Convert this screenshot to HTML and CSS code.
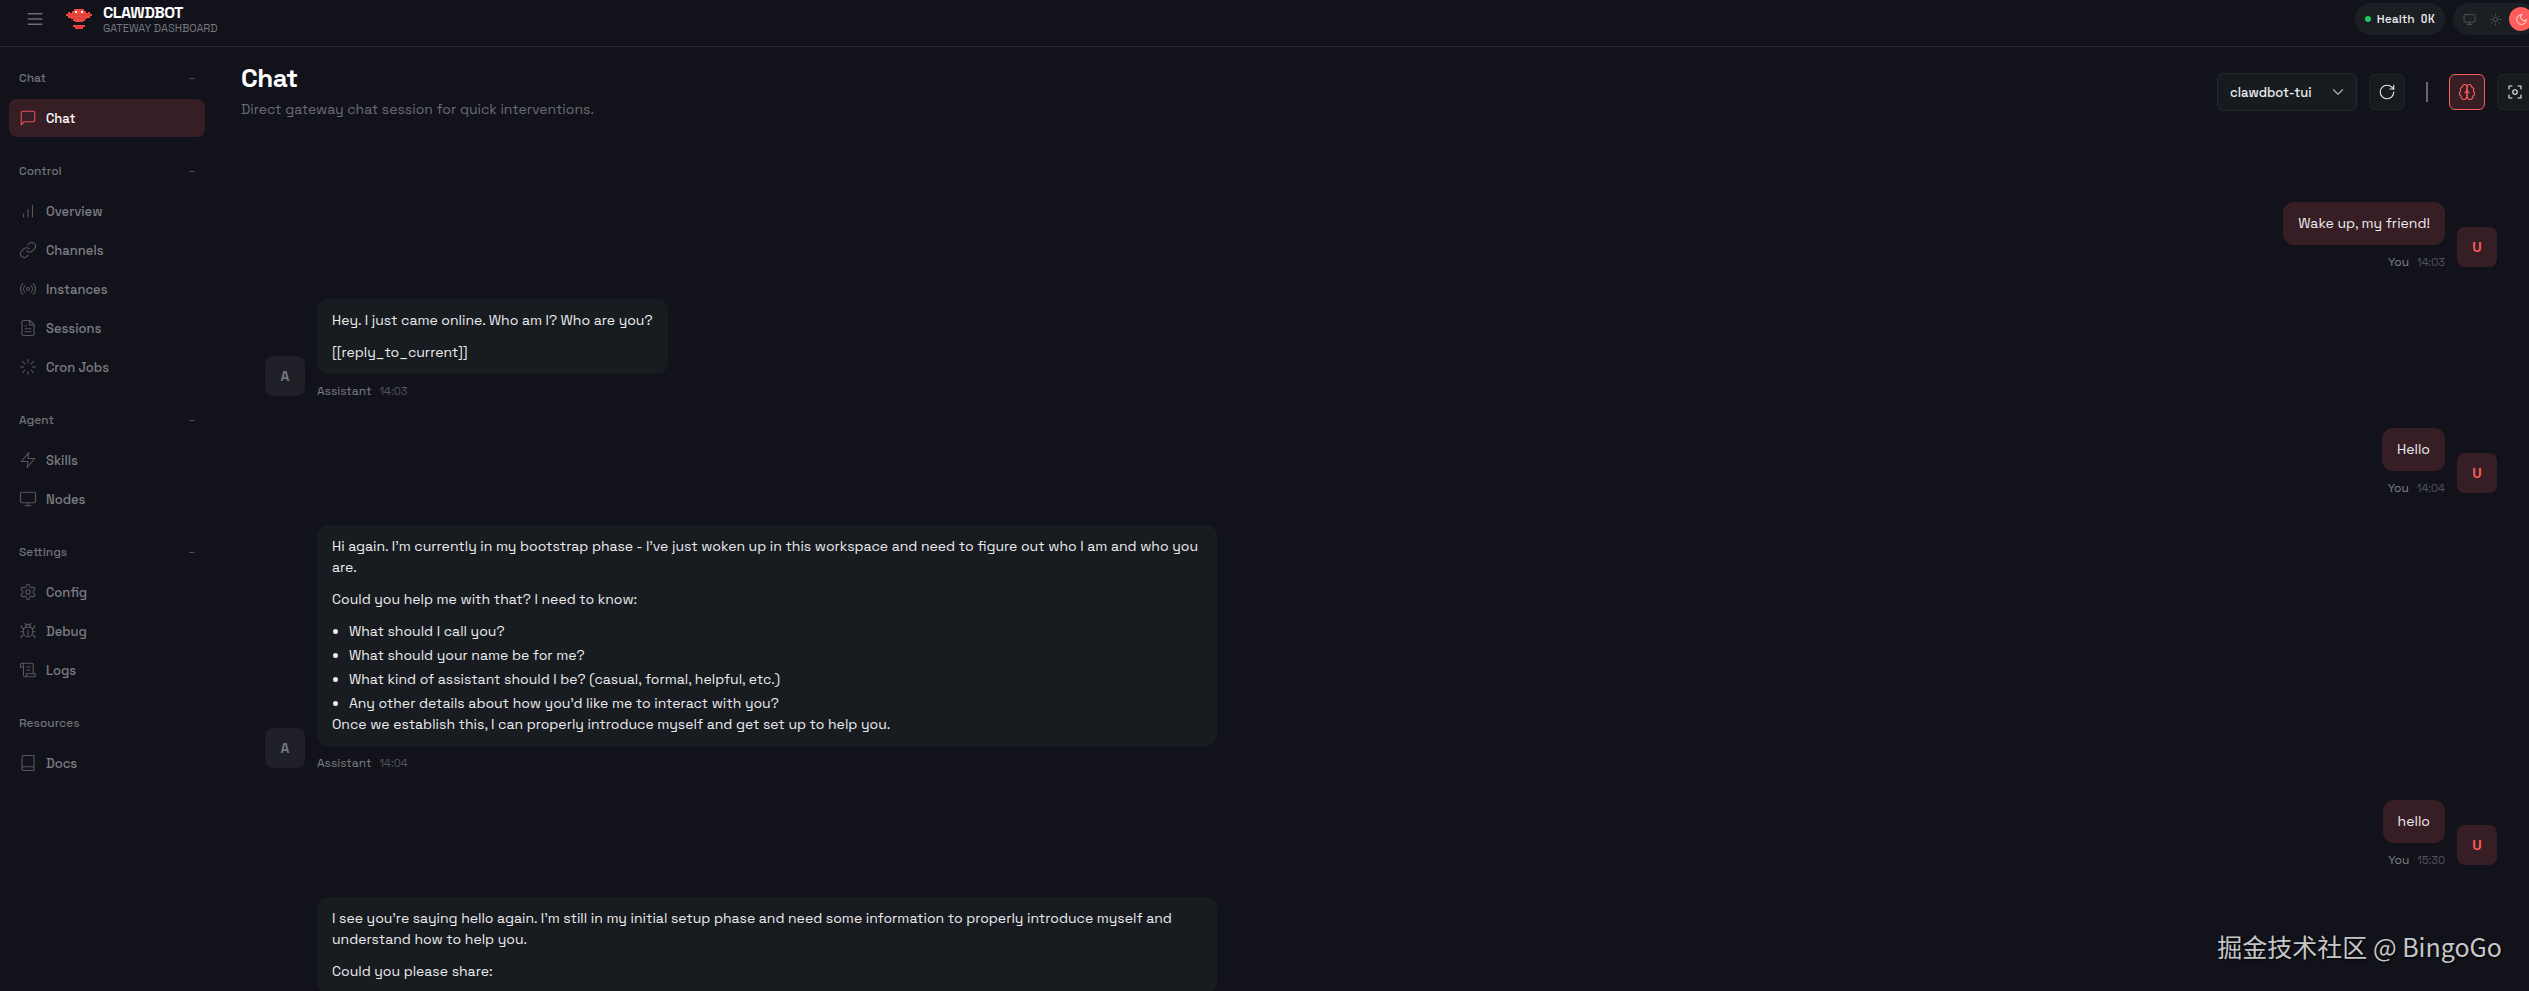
FILE: index.html
```
<!DOCTYPE html>
<html lang="en">
<head>
    <meta charset="UTF-8">
    <title>Clawdbot Control</title>
    <link rel="stylesheet" href="styles.css">
</head>
<body>
<!-- shared icons -->
<svg class="sprite" xmlns="http://www.w3.org/2000/svg">
    <symbol id="i-menu" viewBox="0 0 24 24"><path d="M3 5h18M3 12h18M3 19h18"/></symbol>
    <symbol id="i-chat" viewBox="0 0 24 24"><path d="M21 15a2 2 0 0 1-2 2H7l-4 4V5a2 2 0 0 1 2-2h14a2 2 0 0 1 2 2z"/></symbol>
    <symbol id="i-bars" viewBox="0 0 24 24"><path d="M12 20V10M18 20V4M6 20v-4"/></symbol>
    <symbol id="i-link" viewBox="0 0 24 24"><path d="M10 13a5 5 0 0 0 7.54.54l3-3a5 5 0 0 0-7.07-7.07l-1.72 1.71"/><path d="M14 11a5 5 0 0 0-7.54-.54l-3 3a5 5 0 0 0 7.07 7.07l1.71-1.71"/></symbol>
    <symbol id="i-radio" viewBox="0 0 24 24"><path d="M4.9 19.1C1 15.2 1 8.8 4.9 4.9M7.8 16.2c-2.3-2.3-2.3-6.1 0-8.5M16.2 7.8c2.3 2.3 2.3 6.1 0 8.5M19.1 4.9C23 8.8 23 15.1 19.1 19"/><circle cx="12" cy="12" r="2"/></symbol>
    <symbol id="i-file" viewBox="0 0 24 24"><path d="M14.5 2H6a2 2 0 0 0-2 2v16a2 2 0 0 0 2 2h12a2 2 0 0 0 2-2V7.5L14.5 2z"/><path d="M14 2v6h6M16 13H8M16 17H8M10 9H8"/></symbol>
    <symbol id="i-loader" viewBox="0 0 24 24"><path d="M12 2v4M12 18v4M4.93 4.93l2.83 2.83M16.24 16.24l2.83 2.83M2 12h4M18 12h4M4.93 19.07l2.83-2.83M16.24 7.76l2.83-2.83"/></symbol>
    <symbol id="i-zap" viewBox="0 0 24 24"><path d="M13 2L3 14h9l-1 8 10-12h-9l1-8z"/></symbol>
    <symbol id="i-monitor" viewBox="0 0 24 24"><rect x="2" y="3" width="20" height="14" rx="2"/><path d="M8 21h8M12 17v4"/></symbol>
    <symbol id="i-gear" viewBox="0 0 24 24"><path d="M12.22 2h-.44a2 2 0 0 0-2 2v.18a2 2 0 0 1-1 1.73l-.43.25a2 2 0 0 1-2 0l-.15-.08a2 2 0 0 0-2.73.73l-.22.38a2 2 0 0 0 .73 2.73l.15.1a2 2 0 0 1 1 1.72v.51a2 2 0 0 1-1 1.74l-.15.09a2 2 0 0 0-.73 2.73l.22.38a2 2 0 0 0 2.73.73l.15-.08a2 2 0 0 1 2 0l.43.25a2 2 0 0 1 1 1.73V20a2 2 0 0 0 2 2h.44a2 2 0 0 0 2-2v-.18a2 2 0 0 1 1-1.73l.43-.25a2 2 0 0 1 2 0l.15.08a2 2 0 0 0 2.73-.73l.22-.39a2 2 0 0 0-.73-2.73l-.15-.08a2 2 0 0 1-1-1.74v-.5a2 2 0 0 1 1-1.74l.15-.09a2 2 0 0 0 .73-2.73l-.22-.38a2 2 0 0 0-2.73-.73l-.15.08a2 2 0 0 1-2 0l-.43-.25a2 2 0 0 1-1-1.73V4a2 2 0 0 0-2-2z"/><circle cx="12" cy="12" r="3"/></symbol>
    <symbol id="i-bug" viewBox="0 0 24 24"><path d="m8 2 1.88 1.88M14.12 3.88 16 2M9 7.13v-1a3 3 0 1 1 6 0v1"/><path d="M12 20c-3.3 0-6-2.7-6-6v-3a4 4 0 0 1 4-4h4a4 4 0 0 1 4 4v3c0 3.3-2.7 6-6 6M12 20v-9M6.53 9C4.6 8.8 3 7.1 3 5M6 13H2M3 21c0-2.1 1.7-3.9 3.8-4M20.97 5c0 2.1-1.6 3.8-3.5 4M22 13h-4M17.2 17c2.1.1 3.8 1.9 3.8 4"/></symbol>
    <symbol id="i-scroll" viewBox="0 0 24 24"><path d="M8 21h12a2 2 0 0 0 2-2v-2H10v2a2 2 0 1 1-4 0V5a2 2 0 1 0-4 0v3h4"/><path d="M19 17V5a2 2 0 0 0-2-2H4M15 8h-5M15 12h-5"/></symbol>
    <symbol id="i-book" viewBox="0 0 24 24"><path d="M4 19.5v-15A2.5 2.5 0 0 1 6.5 2H20v20H6.5a2.5 2.5 0 0 1 0-5H20"/></symbol>
    <symbol id="i-refresh" viewBox="0 0 24 24"><path d="M21 12a9 9 0 1 1-9-9c2.52 0 4.93 1 6.74 2.74L21 8"/><path d="M21 3v5h-5"/></symbol>
    <symbol id="i-brain" viewBox="0 0 24 24"><path d="M12 5a3 3 0 1 0-5.997.125 4 4 0 0 0-2.526 5.77 4 4 0 0 0 .556 6.588A4 4 0 1 0 12 18Z"/><path d="M12 5a3 3 0 1 1 5.997.125 4 4 0 0 1 2.526 5.77 4 4 0 0 1-.556 6.588A4 4 0 1 1 12 18Z"/><path d="M15 13a4.5 4.5 0 0 1-3-4 4.5 4.5 0 0 1-3 4"/></symbol>
    <symbol id="i-focus" viewBox="0 0 24 24"><path d="M4 8V4h4M16 4h4v4M20 16v4h-4M8 20H4v-4"/><circle cx="12" cy="12" r="3"/></symbol>
    <symbol id="i-sun" viewBox="0 0 24 24"><circle cx="12" cy="12" r="4"/><path d="M12 2v2M12 20v2M4.93 4.93l1.41 1.41M17.66 17.66l1.41 1.41M2 12h2M20 12h2M6.34 17.66l-1.41 1.41M19.07 4.93l-1.41 1.41"/></symbol>
    <symbol id="i-moon" viewBox="0 0 24 24"><path d="M12 3a6 6 0 0 0 9 9 9 9 0 1 1-9-9Z"/></symbol>
    <symbol id="i-down" viewBox="0 0 24 24"><path d="m6 9 6 6 6-6"/></symbol>
</svg>

<div class="app">
    <header class="topbar">
        <button class="menu-btn" type="button" aria-label="Toggle menu"><svg class="icon"><use href="#i-menu"/></svg></button>
        <svg class="logo" viewBox="0 0 26 22" aria-hidden="true">
            <path class="logo-body" d="M8 1h10v2h2v2h2V4h2v2h2v2h-2v2h-3v1h-2v2h-2v1H9v-1H7v-2H5v-1H2V8H0V6h2V4h2v1h2V3h2z"/>
            <path class="logo-body" d="M7 17h12v2h-2v2H9v-2H7z"/>
            <path class="logo-line" d="M2 7h22M6 10h14M9 19h8"/>
            <path class="logo-eye" d="M9 3h2v2H9zM15 3h2v2h-2z"/>
        </svg>
        <div class="brand">
            <div class="brand-title">CLAWDBOT</div>
            <div class="brand-sub">GATEWAY DASHBOARD</div>
        </div>
        <div class="topbar-status">
            <div class="pill"><span class="dot"></span><span>Health</span><span class="mono">OK</span></div>
            <div class="theme">
                <button type="button" aria-label="System theme"><svg class="icon"><use href="#i-monitor"/></svg></button>
                <button type="button" aria-label="Light theme"><svg class="icon"><use href="#i-sun"/></svg></button>
                <button class="active" type="button" aria-label="Dark theme"><svg class="icon"><use href="#i-moon"/></svg></button>
            </div>
        </div>
    </header>

    <div class="shell">
        <nav class="nav">
            <div class="nav-group">
                <button class="nav-label" type="button"><span>Chat</span><span class="minus">−</span></button>
                <a class="nav-item active" href="#chat"><svg class="icon"><use href="#i-chat"/></svg>Chat</a>
            </div>
            <div class="nav-group">
                <button class="nav-label" type="button"><span>Control</span><span class="minus">−</span></button>
                <a class="nav-item" href="#overview"><svg class="icon"><use href="#i-bars"/></svg>Overview</a>
                <a class="nav-item" href="#channels"><svg class="icon"><use href="#i-link"/></svg>Channels</a>
                <a class="nav-item" href="#instances"><svg class="icon"><use href="#i-radio"/></svg>Instances</a>
                <a class="nav-item" href="#sessions"><svg class="icon"><use href="#i-file"/></svg>Sessions</a>
                <a class="nav-item" href="#cron"><svg class="icon"><use href="#i-loader"/></svg>Cron Jobs</a>
            </div>
            <div class="nav-group">
                <button class="nav-label" type="button"><span>Agent</span><span class="minus">−</span></button>
                <a class="nav-item" href="#skills"><svg class="icon"><use href="#i-zap"/></svg>Skills</a>
                <a class="nav-item" href="#nodes"><svg class="icon"><use href="#i-monitor"/></svg>Nodes</a>
            </div>
            <div class="nav-group">
                <button class="nav-label" type="button"><span>Settings</span><span class="minus">−</span></button>
                <a class="nav-item" href="#config"><svg class="icon"><use href="#i-gear"/></svg>Config</a>
                <a class="nav-item" href="#debug"><svg class="icon"><use href="#i-bug"/></svg>Debug</a>
                <a class="nav-item" href="#logs"><svg class="icon"><use href="#i-scroll"/></svg>Logs</a>
            </div>
            <div class="nav-group">
                <div class="nav-label"><span>Resources</span></div>
                <a class="nav-item" href="#docs"><svg class="icon"><use href="#i-book"/></svg>Docs</a>
            </div>
        </nav>

        <main class="content">
            <div class="content-header">
                <div>
                    <h1 class="page-title">Chat</h1>
                    <p class="page-sub">Direct gateway chat session for quick interventions.</p>
                </div>
                <div class="chat-controls">
                    <div class="select-wrap">
                        <select class="session" aria-label="Session"><option>clawdbot-tui</option></select>
                        <svg class="icon chevron"><use href="#i-down"/></svg>
                    </div>
                    <button class="btn-icon" type="button" aria-label="Refresh"><svg class="icon"><use href="#i-refresh"/></svg></button>
                    <span class="divider"></span>
                    <button class="btn-icon active" type="button" aria-label="Toggle thinking"><svg class="icon"><use href="#i-brain"/></svg></button>
                    <button class="btn-icon" type="button" aria-label="Focus mode"><svg class="icon"><use href="#i-focus"/></svg></button>
                </div>
            </div>

            <div class="thread">
                <div class="group user">
                    <div class="avatar">U</div>
                    <div class="messages">
                        <div class="bubble"><p>Wake up, my friend!</p></div>
                        <div class="meta"><span>You</span><span class="time">14:03</span></div>
                    </div>
                </div>
                <div class="group">
                    <div class="avatar">A</div>
                    <div class="messages">
                        <div class="bubble">
                            <p>Hey. I just came online. Who am I? Who are you?</p>
                            <p>[[reply_to_current]]</p>
                        </div>
                        <div class="meta"><span>Assistant</span><span class="time">14:03</span></div>
                    </div>
                </div>
                <div class="group user">
                    <div class="avatar">U</div>
                    <div class="messages">
                        <div class="bubble"><p>Hello</p></div>
                        <div class="meta"><span>You</span><span class="time">14:04</span></div>
                    </div>
                </div>
                <div class="group">
                    <div class="avatar">A</div>
                    <div class="messages">
                        <div class="bubble">
                            <p>Hi again. I’m currently in my bootstrap phase - I’ve just woken up in this workspace and need to figure out who I am and who you are.</p>
                            <p>Could you help me with that? I need to know:</p>
                            <ul>
                                <li>What should I call you?</li>
                                <li>What should your name be for me?</li>
                                <li>What kind of assistant should I be? (casual, formal, helpful, etc.)</li>
                                <li>Any other details about how you’d like me to interact with you?</li>
                            </ul>
                            <p>Once we establish this, I can properly introduce myself and get set up to help you.</p>
                        </div>
                        <div class="meta"><span>Assistant</span><span class="time">14:04</span></div>
                    </div>
                </div>
                <div class="group user">
                    <div class="avatar">U</div>
                    <div class="messages">
                        <div class="bubble"><p>hello</p></div>
                        <div class="meta"><span>You</span><span class="time">15:30</span></div>
                    </div>
                </div>
                <div class="group">
                    <div class="messages last">
                        <div class="bubble">
                            <p>I see you’re saying hello again. I’m still in my initial setup phase and need some information to properly introduce myself and understand how to help you.</p>
                            <p>Could you please share:</p>
                        </div>
                    </div>
                </div>
            </div>
        </main>
    </div>
</div>
<div class="watermark">掘金技术社区 @ BingoGo</div>
</body>
</html>
```
FILE: styles.css
```
* {
    box-sizing: border-box;
}
body {
    margin: 0;
    height: 100vh;
    overflow: hidden;
    position: relative;
    background: #12131a;
    color: #ebebee;
    font: 14px/21px "Space Grotesk", Inter, "Liberation Sans", sans-serif;
}
button, select {
    font: inherit;
    color: inherit;
    background: none;
    border: 0;
    padding: 0;
}
p, h1, ul {
    margin: 0;
}
.sprite {
    display: none;
}
.icon {
    width: 18px;
    height: 18px;
    flex: none;
    fill: none;
    stroke: currentColor;
    stroke-width: 1.5;
    stroke-linecap: round;
    stroke-linejoin: round;
}
/* runs a little past the window on the right */
.app {
    margin-right: -24px;
}

/* top bar */
.topbar {
    display: flex;
    align-items: center;
    height: 47px;
    padding: 0 16px 8px 26px;
    border-bottom: 1px solid #26272c;
}
.menu-btn {
    display: flex;
    width: 18px;
    color: #6b6c73;
}
.menu-btn .icon {
    stroke-width: 2;
}
.logo {
    width: 26px;
    height: 22px;
    margin-left: 22px;
}
.logo-body {
    fill: #f3473f;
}
.logo-line {
    fill: none;
    stroke: #c93c36;
}
.logo-eye {
    fill: #fff;
}
.brand {
    margin-left: 11px;
}
.brand-title {
    padding-top: 1px;
    font-size: 16px;
    line-height: 16px;
    font-weight: 700;
    letter-spacing: -0.5px;
    color: #fff;
}
.brand-sub {
    font-size: 11px;
    line-height: 14px;
    font-weight: 400;
    color: #77787f;
}
.topbar-status {
    display: flex;
    gap: 8px;
    margin-left: auto;
}
.pill {
    display: flex;
    align-items: center;
    gap: 6px;
    height: 32px;
    padding: 0 10px;
    border-radius: 16px;
    background: #1b1e23;
    font-size: 12px;
    font-weight: 500;
}
.dot {
    width: 6px;
    height: 6px;
    border-radius: 50%;
    background: #22c55e;
}
.mono {
    font-family: "JetBrains Mono", Roboto, monospace;
    font-size: 12px;
}
.theme {
    display: flex;
    align-items: center;
    gap: 2px;
    height: 32px;
    padding: 4px;
    border-radius: 16px;
    background: #1b1e23;
}
.theme button {
    display: flex;
    align-items: center;
    justify-content: center;
    width: 24px;
    height: 24px;
    border-radius: 50%;
    color: #5b5c63;
}
.theme .icon {
    width: 13px;
    height: 13px;
}
.theme .active {
    background: #ff5c5c;
    color: #fff;
}

/* sidebar */
.shell {
    display: flex;
}
.nav {
    flex: none;
    width: 214px;
    padding: 18px 9px;
}
.nav-group {
    display: flex;
    flex-direction: column;
    gap: 1px;
    margin-bottom: 21px;
}
.nav-label {
    display: flex;
    justify-content: space-between;
    align-items: center;
    height: 26px;
    margin-bottom: 7px;
    padding: 0 10px;
    font-size: 12px;
    font-weight: 500;
    color: #6f7077;
}
.minus {
    font-size: 10px;
    font-weight: 400;
}
.nav-item {
    display: flex;
    align-items: center;
    gap: 9px;
    height: 38px;
    padding: 0 10px;
    border-radius: 8px;
    font-size: 13px;
    font-weight: 500;
    color: #7b7c83;
    text-decoration: none;
}
.nav-item .icon {
    color: #55565d;
}
.nav-item.active {
    background: #371e24;
    color: #fff;
}
.nav-item.active .icon {
    color: #e05055;
}

/* content */
.content {
    flex: 1;
    padding: 16px 20px 0 27px;
}
.content-header {
    display: flex;
    justify-content: space-between;
    align-items: flex-start;
}
.page-title {
    font-size: 26px;
    line-height: 30px;
    font-weight: 700;
    letter-spacing: -0.5px;
    color: #fff;
}
.page-sub {
    margin-top: 6px;
    color: #6b6c73;
}
.chat-controls {
    display: flex;
    align-items: center;
    gap: 12px;
    padding-top: 10px;
}
.select-wrap {
    display: grid;
    align-items: center;
    width: 140px;
}
.session {
    grid-area: 1 / 1;
    height: 38px;
    padding: 0 12px;
    appearance: none;
    border: 1px solid #26292e;
    border-radius: 6px;
    background: #171b20;
    font-size: 13px;
    font-weight: 500;
}
.chevron {
    grid-area: 1 / 1;
    justify-self: end;
    margin-right: 10px;
    pointer-events: none;
    color: #b0b1b6;
}
.btn-icon {
    display: flex;
    align-items: center;
    justify-content: center;
    width: 36px;
    height: 36px;
    border: 1px solid #22252a;
    border-radius: 6px;
    background: #171b20;
}
.btn-icon.active {
    border-color: #ff5c5c;
    background: #371e24;
    color: #ff5c5c;
}
.divider {
    width: 2px;
    height: 20px;
    margin: 0 9px;
    background: #65676c;
}

/* messages */
.thread {
    display: flex;
    flex-direction: column;
    gap: 28px;
    padding: 82px 36px 0 24px;
}
.group {
    display: flex;
    align-items: flex-end;
    gap: 12px;
}
.group.user {
    flex-direction: row-reverse;
}
.avatar {
    display: flex;
    align-items: center;
    justify-content: center;
    width: 40px;
    height: 40px;
    margin-bottom: 4px;
    border-radius: 8px;
    background: #1f1f27;
    color: #75767d;
    font-weight: 600;
}
.user .avatar {
    background: #371e24;
    color: #ff5c5c;
    font-weight: 700;
}
.messages {
    display: flex;
    flex-direction: column;
    align-items: flex-start;
    max-width: 900px;
}
.user .messages {
    align-items: flex-end;
}
.messages.last {
    margin-left: 52px;
}
.bubble {
    padding: 11px 15px;
    border-radius: 11px;
    background: #181b20;
}
.user .bubble {
    background: #371e24;
}
.bubble p + p, .bubble ul {
    margin-top: 11px;
}
.bubble ul {
    padding-left: 17px;
}
.bubble li + li {
    margin-top: 3px;
}
.meta {
    display: flex;
    gap: 8px;
    margin-top: 8px;
    font-size: 12px;
    line-height: 18px;
    font-weight: 400;
    color: #7f8087;
}
.time {
    font-size: 11px;
    color: #54555c;
}
.watermark {
    position: absolute;
    right: 27px;
    bottom: 27px;
    font: 25px/36px "Noto Sans CJK SC", sans-serif;
    color: #c6c6c9;
    text-shadow: 1px 1px 2px #000;
}
```
